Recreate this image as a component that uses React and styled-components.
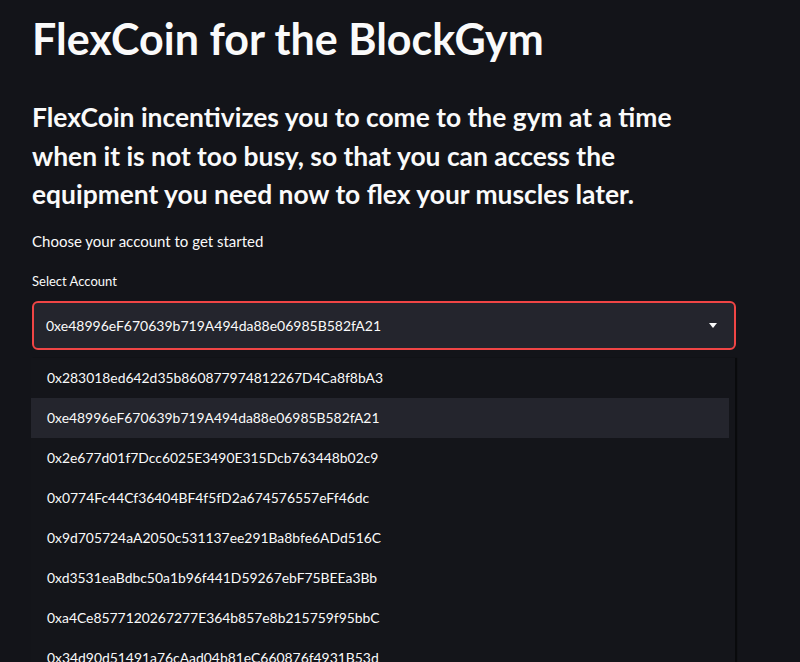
import React from "react";
import styled, { createGlobalStyle } from "styled-components";

const GlobalStyle = createGlobalStyle`
  html, body {
    margin: 0;
    padding: 0;
    background: #131419;
    color: #fafafa;
    font-family: Lato, "Noto Sans", sans-serif;
    overflow: hidden;
  }
`;

const Main = styled.main`
  height: 662px;
  padding: 11px 64px 0 32px;
  box-sizing: border-box;
`;

const Title = styled.h1`
  margin: 0;
  font-size: 43px;
  font-weight: 700;
  line-height: 56px;
`;

const Subtitle = styled.h3`
  margin: 31px 0 0;
  font-size: 26.4px;
  font-weight: 700;
  line-height: 38.5px;
  max-width: 680px;
`;

const Intro = styled.p`
  margin: 15px 0 0;
  font-size: 15px;
  line-height: 24px;
`;

const Label = styled.label`
  display: block;
  margin-top: 18px;
  font-size: 13px;
  line-height: 20px;
`;

const SelectWrap = styled.div`
  position: relative;
  margin-top: 10px;
`;

const SelectBox = styled.div`
  height: 49px;
  box-sizing: border-box;
  display: flex;
  align-items: center;
  justify-content: space-between;
  padding: 0 17px 0 12px;
  background: #24252d;
  border: 2px solid #f04545;
  border-radius: 6px;
  font-size: 14px;
`;

const Caret = styled.svg`
  width: 8px;
  height: 5px;
  fill: #fafafa;
`;

const Menu = styled.ul`
  position: absolute;
  top: calc(100% + 8px);
  left: -1px;
  width: 704px;
  margin: 0;
  padding: 0 6px 0 0;
  list-style: none;
  background: #14151a;
  box-shadow: 2px 0 1px rgba(0, 0, 0, 0.5);
  box-sizing: border-box;
`;

const Option = styled.li`
  height: 40px;
  display: flex;
  align-items: center;
  padding-left: 16px;
  font-size: 13.9px;
  background: ${(p) => (p.$active ? "#24252d" : "transparent")};
`;

const accounts = [
  "0x283018ed642d35b860877974812267D4Ca8f8bA3",
  "0xe48996eF670639b719A494da88e06985B582fA21",
  "0x2e677d01f7Dcc6025E3490E315Dcb763448b02c9",
  "0x0774Fc44Cf36404BF4f5fD2a674576557eFf46dc",
  "0x9d705724aA2050c531137ee291Ba8bfe6ADd516C",
  "0xd3531eaBdbc50a1b96f441D59267ebF75BEEa3Bb",
  "0xa4Ce8577120267277E364b857e8b215759f95bbC",
  "0x34d90d51491a76cAad04b81eC660876f4931B53d",
];

export default function App() {
  const selected = accounts[1];
  return (
    <>
      <GlobalStyle />
      <Main>
        <Title>FlexCoin for the BlockGym</Title>
        <Subtitle>
          FlexCoin incentivizes you to come to the gym at a time when it is not
          too busy, so that you can access the equipment you need now to flex
          your muscles later.
        </Subtitle>
        <Intro>Choose your account to get started</Intro>
        <Label>Select Account</Label>
        <SelectWrap>
          <SelectBox>
            <span>{selected}</span>
            <Caret viewBox="0 0 8 5">
              <path d="M0 0h8L4 5z" />
            </Caret>
          </SelectBox>
          <Menu>
            {accounts.map((a) => (
              <Option key={a} $active={a === selected}>
                {a}
              </Option>
            ))}
          </Menu>
        </SelectWrap>
      </Main>
    </>
  );
}
